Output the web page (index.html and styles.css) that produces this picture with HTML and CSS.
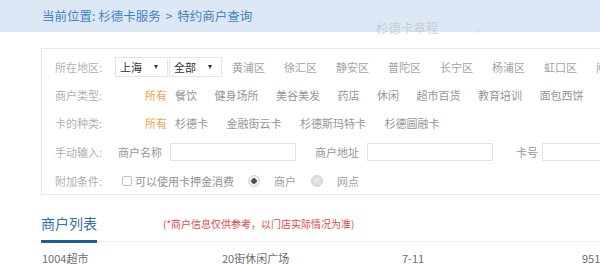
FILE: index.html
```html
<!DOCTYPE html>
<html lang="zh-CN">
<head>
<meta charset="utf-8">
<title>特约商户查询</title>
<link rel="stylesheet" href="styles.css">
</head>
<body>
<div class="page">
  <div class="topbar">
    <div class="crumb">当前位置: 杉德卡服务 <span class="sep">&gt;</span> 特约商户查询</div>
    <div class="ghost">杉德卡章程<span class="ghost-arrow">∨</span></div>
  </div>

  <div class="filter">
    <div class="row">
      <span class="label">所在地区:</span>
      <div class="select">上海<i class="caret"></i></div>
      <div class="select second">全部<i class="caret"></i></div>
      <ul class="opts districts">
        <li>黄浦区</li><li>徐汇区</li><li>静安区</li><li>普陀区</li><li>长宁区</li><li>杨浦区</li><li>虹口区</li><li>闸北区</li>
      </ul>
    </div>
    <div class="row">
      <span class="label">商户类型:</span>
      <span class="all">所有</span>
      <ul class="opts types">
        <li>餐饮</li><li>健身场所</li><li>美谷美发</li><li>药店</li><li>休闲</li><li>超市百货</li><li>教育培训</li><li>面包西饼</li>
      </ul>
    </div>
    <div class="row">
      <span class="label">卡的种类:</span>
      <span class="all">所有</span>
      <ul class="opts cards">
        <li>杉德卡</li><li>金融街云卡</li><li>杉德斯玛特卡</li><li>杉德圆融卡</li>
      </ul>
    </div>
    <div class="row input-row">
      <span class="label">手动输入:</span>
      <span class="field-label name">商户名称</span><span class="input"></span>
      <span class="field-label addr">商户地址</span><span class="input"></span>
      <span class="field-label card">卡号</span><span class="input card-input"></span>
    </div>
    <div class="row last-row">
      <span class="label">附加条件:</span>
      <span class="checkbox"></span><span class="check-text">可以使用卡押金消费</span>
      <span class="radio checked"></span><span class="radio-text">商户</span>
      <span class="radio"></span><span class="radio-text">网点</span>
    </div>
  </div>

  <div class="tabs">
    <div class="tab">商户列表</div>
    <div class="note">(*商户信息仅供参考，以门店实际情况为准)</div>
  </div>

  <div class="list-row">
    <span>1004超市</span>
    <span>20街休闲广场</span>
    <span>7-11</span>
    <span>951</span>
  </div>
</div>
</body>
</html>
```

FILE: styles.css
```css
html, body {
  margin: 0;
  padding: 0;
}

body {
  font-family: "Noto Sans CJK SC", "Noto Sans", sans-serif;
  background: #fff;
  overflow: hidden;
}

.page {
  width: 600px;
  height: 265px;
  overflow: hidden;
  position: relative;
}

.topbar {
  height: 32px;
  background: #dce8f5;
  position: relative;
}

.crumb {
  padding-left: 42px;
  line-height: 32px;
  font-size: 12.5px;
  color: #4483c6;
  white-space: nowrap;
}

.sep {
  margin: 0 2px;
}

.ghost {
  position: absolute;
  left: 376px;
  top: 20px;
  font-size: 12.5px;
  line-height: 16px;
  color: #c8cdd3;
  filter: blur(0.4px);
  white-space: nowrap;
}

.ghost-arrow {
  font-size: 8px;
  margin-left: 36px;
  color: #d3d8de;
}

.filter {
  margin: 16px 0 0 41px;
  width: 760px;
  border: 1px solid #e8e8e8;
  padding: 5px 0 0 13px;
}

.row {
  display: flex;
  align-items: center;
  height: 26px;
  font-size: 11px;
  white-space: nowrap;
}

.row:nth-child(2),
.row:nth-child(3) {
  padding-top: 2px;
}

.input-row {
  height: 30px;
  margin-top: 1px;
}

.last-row {
  height: 27px;
}

.label {
  flex: none;
  width: 60px;
  color: #b0b0b0;
}

.select {
  flex: none;
  width: 53px;
  height: 20px;
  box-sizing: border-box;
  border: 1px solid #e6e6e6;
  display: flex;
  align-items: center;
  justify-content: space-between;
  padding: 0 9px 0 4px;
  color: #333;
}

.select.second {
  margin-left: 1px;
}

.caret {
  width: 0;
  height: 0;
  border-left: 2.5px solid transparent;
  border-right: 2.5px solid transparent;
  border-top: 4px solid #333;
}

.opts {
  display: flex;
  list-style: none;
  margin: 0;
  padding: 0;
  color: #a3a3a3;
}

.districts {
  margin-left: 10px;
  gap: 19px;
}

.types {
  gap: 17.5px;
  color: #969696;
}

.cards {
  gap: 18.5px;
  color: #969696;
}

.all {
  color: #f2a445;
  margin-left: 30px;
  margin-right: 8px;
}

.field-label {
  color: #969696;
}

.field-label.name {
  margin-left: 3px;
}

.field-label.addr {
  margin-left: 19px;
}

.field-label.card {
  margin-left: 23px;
}

.input {
  flex: none;
  width: 126px;
  height: 18px;
  box-sizing: border-box;
  border: 1px solid #e5e5e5;
  margin-left: 8px;
}

.input.card-input {
  margin-left: 4px;
}

.checkbox {
  flex: none;
  width: 10px;
  height: 10px;
  box-sizing: border-box;
  border: 1px solid #c4c4c4;
  border-radius: 2px;
  margin-left: 7px;
}

.check-text {
  margin-left: 3px;
  color: #929292;
}

.radio {
  flex: none;
  width: 12px;
  height: 12px;
  box-sizing: border-box;
  border-radius: 50%;
  border: 1px solid #d3d3d3;
  background: radial-gradient(circle at 50% 40%, #e8e8e8, #d4d4d4);
  margin-left: 15px;
}

.radio.checked {
  margin-left: 14px;
  background: radial-gradient(circle, #505050 0, #505050 2.5px, #ededed 3px);
}

.radio-text {
  margin-left: 14px;
  color: #a0a0a0;
}

.tabs {
  margin: 18px 0 0 41px;
  width: 700px;
  height: 28px;
  display: flex;
  align-items: flex-start;
  border-bottom: 1px solid #ededed;
}

.tab {
  flex: none;
  font-size: 14px;
  line-height: 20px;
  padding-bottom: 7px;
  border-bottom: 3px solid #1f5e9c;
  color: #3270ad;
}

.note {
  margin-left: 66px;
  margin-top: 4px;
  font-size: 10px;
  line-height: 14px;
  color: #e54545;
  white-space: nowrap;
}

.list-row {
  display: grid;
  grid-template-columns: repeat(4, 180px);
  margin-left: 42px;
  padding-top: 9px;
  line-height: 15px;
  font-size: 11px;
  color: #6e6e6e;
  white-space: nowrap;
}
```
